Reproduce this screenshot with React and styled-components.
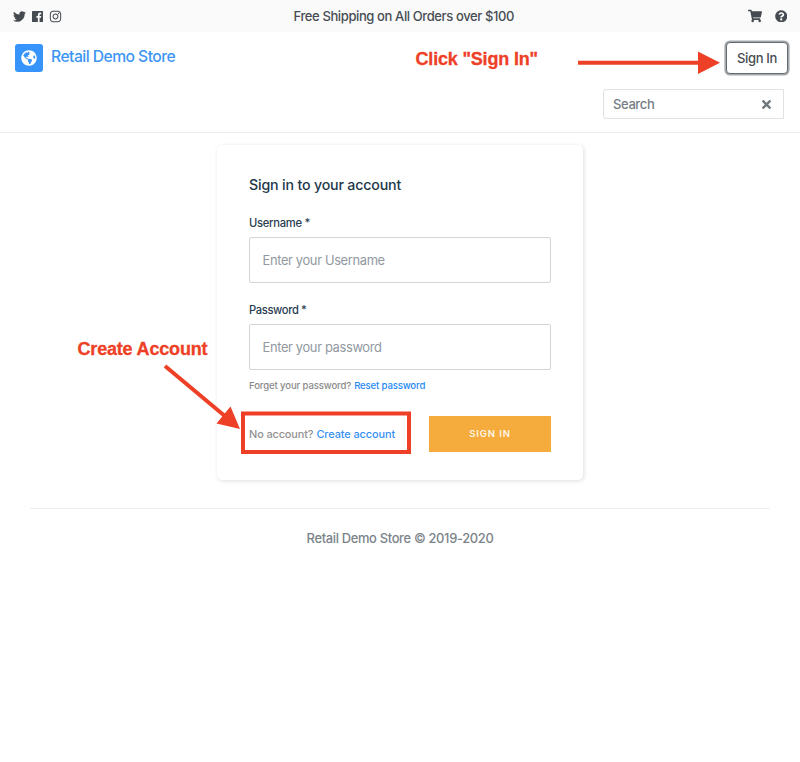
import React from "react";
import styled, { createGlobalStyle } from "styled-components";
import { FaTwitter, FaInstagram, FaShoppingCart, FaQuestionCircle, FaTimes, FaGlobeAmericas } from "react-icons/fa";

const GlobalStyle = createGlobalStyle`
  * { box-sizing: border-box; }
  body { margin: 0; background: #fff; font-family: Inter, "Liberation Sans", sans-serif; }
  button, input { font-family: inherit; }
`;

const Page = styled.div`
  position: relative;
  height: 762px;
  overflow: hidden;
`;

const Label = styled.span`
  font-size: ${(p) => p.$size}px;
  line-height: 20px;
  font-weight: ${(p) => p.$weight || 450};
  color: ${(p) => p.$color};
  letter-spacing: ${(p) => p.$track || 0}px;
  white-space: nowrap;
`;

const TopBar = styled.div`
  display: grid;
  grid-template-columns: 281px 1fr 273px;
  align-items: center;
  height: 32px;
  padding: 0 13px 0 12.5px;
  background: #fafafa;
  color: #454b50;
  text-align: center;
`;

const IconGroup = styled.div`
  display: flex;
  align-items: center;
  justify-content: ${(p) => (p.$end ? "flex-end" : "flex-start")};
  gap: ${(p) => p.$gap}px;
`;

const Header = styled.header`
  display: flex;
  justify-content: space-between;
  height: 101px;
  padding: 9px 11px 0 14.5px;
  border-bottom: 1px solid #ebebeb;
`;

const Brand = styled.a`
  display: flex;
  gap: 8.5px;
  padding-top: 2px;
  height: 30px;
`;

const Logo = styled.div`
  display: flex;
  align-items: center;
  justify-content: center;
  width: 28px;
  height: 28px;
  margin-top: 1px;
  border-radius: 3px;
  background: #3794fb;
  color: #fff;
`;

const BrandText = styled.div`
  padding-top: 3px;
`;

const Actions = styled.div`
  display: flex;
  flex-direction: column;
  align-items: flex-end;
  gap: 14px;
`;

const OutlineButton = styled.button`
  width: 62px;
  height: 32px;
  margin: 1px 1px 1px 0;
  padding: 0;
  background: #fff;
  border: 1px solid #666b70;
  border-radius: 4px;
  box-shadow: 0 0 0 1.6px #a4a8aa;
`;

const SearchBox = styled.div`
  display: flex;
  align-items: center;
  justify-content: space-between;
  width: 181px;
  height: 30px;
  margin-right: 5.5px;
  padding: 0 10px 0 9.5px;
  border: 1px solid #dfe1e4;
  border-radius: 3px 0 0 3px;
  color: #70777d;
`;

const Card = styled.form`
  display: flex;
  flex-direction: column;
  width: 366px;
  height: 335px;
  margin: 12px auto 0;
  padding: 30px 32px 0;
  border-radius: 5px;
  background: #fff;
  box-shadow: 1px 1px 4px 0 rgba(0, 0, 0, 0.13);
`;

const Field = styled.label`
  display: flex;
  flex-direction: column;
  gap: 4px;
  margin-top: ${(p) => p.$gap}px;
`;

const Input = styled.input`
  width: 302px;
  height: 46px;
  padding: 0 12.5px;
  border: 1px solid #d3d5d8;
  border-radius: 2px;
  background: #fff;
  font-size: 12.9px;
  letter-spacing: -0.35px;
  &::placeholder { color: #9299a1; opacity: 1; }
`;

const Hint = styled.div`
  display: flex;
  gap: 3px;
  margin-top: 6px;
`;

const FormFooter = styled.div`
  display: flex;
  justify-content: space-between;
  align-items: center;
  height: 36px;
  margin-top: 20px;
`;

const AccountLinks = styled.div`
  display: flex;
  gap: 3px;
`;

const SubmitButton = styled.button`
  width: 122px;
  height: 36px;
  padding: 0;
  border: 0;
  background: #f5ac3c;
`;

const Footer = styled.footer`
  margin: 28px 30px 0;
  padding-top: 18px;
  border-top: 1px solid #eee;
  text-align: center;
`;

const Annotations = styled.svg`
  position: absolute;
  inset: 0;
  pointer-events: none;
`;

const Callout = styled.div`
  position: absolute;
  left: ${(p) => p.$x}px;
  top: ${(p) => p.$y}px;
  font: 700 18px/22px "Liberation Sans", Arial, sans-serif;
  letter-spacing: ${(p) => p.$track}px;
  color: #ee4026;
  -webkit-text-stroke: 0.3px #ee4026;
  white-space: nowrap;
`;

const FacebookSquare = () => (
  <svg width="11" height="11" viewBox="0 0 22 22">
    <path fill="currentColor" d="M1.2 0H20.8Q22 0 22 1.2V20.8Q22 22 20.8 22H15.2V13.5H18L18.5 10.2H15.2V8Q15.2 6.5 17 6.5H18.6V3.5Q11.7 2.2 11.7 7.6V10.2H8.9V13.5H11.7V22H1.2Q0 22 0 20.8V1.2Q0 0 1.2 0Z" />
  </svg>
);

export default function App() {
  return (
    <Page>
      <GlobalStyle />
      <TopBar>
        <IconGroup $gap={6}>
          <FaTwitter size={13} />
          <FacebookSquare />
          <FaInstagram size={13} />
        </IconGroup>
        <Label $size={13} $color="#474d53" $track={-0.39}>Free Shipping on All Orders over $100</Label>
        <IconGroup $end $gap={12.5}>
          <FaShoppingCart size={14} />
          <FaQuestionCircle size={12.5} />
        </IconGroup>
      </TopBar>
      <Header>
        <Brand>
          <Logo><FaGlobeAmericas size={16} /></Logo>
          <BrandText><Label $size={15.7} $weight={500} $color="#3d96f4" $track={-0.55}>Retail Demo Store</Label></BrandText>
        </Brand>
        <Actions>
          <OutlineButton type="button"><Label $size={13} $color="#474d53" $track={-0.33}>Sign In</Label></OutlineButton>
          <SearchBox>
            <Label $size={13} $color="#757d84" $track={-0.39}>Search</Label>
            <FaTimes size={13} />
          </SearchBox>
        </Actions>
      </Header>
      <Card onSubmit={(e) => e.preventDefault()}>
        <Label $size={14.2} $weight={500} $color="#23384b" $track={-0.17}>Sign in to your account</Label>
        <Field $gap={18}>
          <Label $size={11.2} $color="#293d50" $track={-0.28}>Username *</Label>
          <Input placeholder="Enter your Username" />
        </Field>
        <Field $gap={17}>
          <Label $size={11.2} $color="#293d50" $track={-0.37}>Password *</Label>
          <Input type="password" placeholder="Enter your password" />
        </Field>
        <Hint>
          <Label $size={9.6} $color="#8b8b8b" $track={-0.14}>Forget your password?</Label>
          <Label $size={9.6} $weight={500} $color="#2589f5" $track={-0.16}>Reset password</Label>
        </Hint>
        <FormFooter>
          <AccountLinks>
            <Label $size={10.9} $color="#929292" $track={-0.11}>No account?</Label>
            <Label $size={10.9} $color="#3590f3" $track={-0.07}>Create account</Label>
          </AccountLinks>
          <SubmitButton type="submit"><Label $size={9.5} $weight={600} $color="#fff6e6" $track={0.9}>SIGN IN</Label></SubmitButton>
        </FormFooter>
      </Card>
      <Footer><Label $size={12.9} $color="#7b838a" $track={-0.32}>Retail Demo Store © 2019-2020</Label></Footer>
      <Annotations width="800" height="762" fill="none" stroke="#ee4026">
        <path d="M578 62.7H700M165 366L226 417" strokeWidth="4" />
        <path d="M698 51.5L720 62.7L698 74ZM240 429L230.5 406.5L216.5 423.5Z" fill="#ee4026" stroke="none" />
        <rect x="243" y="413.5" width="166" height="38.5" strokeWidth="4" />
      </Annotations>
      <Callout $x={415.5} $y={48} $track={-0.18}>Click "Sign In"</Callout>
      <Callout $x={77.5} $y={337.5} $track={-0.18}>Create Account</Callout>
    </Page>
  );
}
